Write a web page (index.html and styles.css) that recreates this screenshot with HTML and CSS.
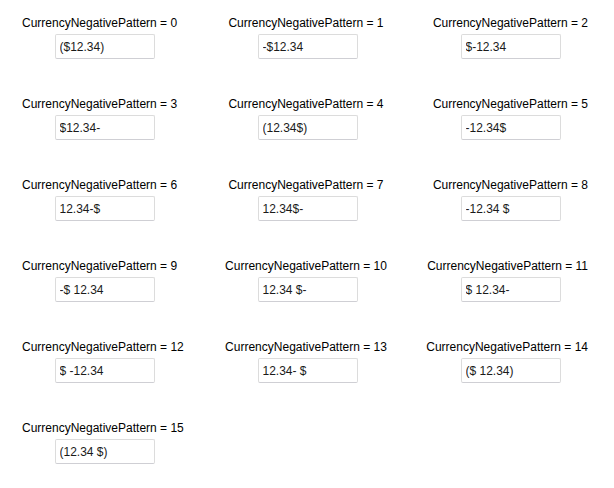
FILE: index.html
```html
<!DOCTYPE html>
<html lang="en">
<head>
    <meta charset="UTF-8">
    <title>CurrencyNegativePattern</title>
    <link rel="stylesheet" href="styles.css">
</head>
<body>
    <!-- one cell per pattern value, three to a row -->
    <div class="pattern-grid">
        <div class="cell col-left">
            <span class="label">CurrencyNegativePattern = 0</span>
            <input class="value-box" type="text" value="($12.34)">
        </div>
        <div class="cell col-mid">
            <span class="label">CurrencyNegativePattern = 1</span>
            <input class="value-box" type="text" value="-$12.34">
        </div>
        <div class="cell col-right">
            <span class="label">CurrencyNegativePattern = 2</span>
            <input class="value-box" type="text" value="$-12.34">
        </div>

        <div class="cell col-left">
            <span class="label">CurrencyNegativePattern = 3</span>
            <input class="value-box" type="text" value="$12.34-">
        </div>
        <div class="cell col-mid">
            <span class="label">CurrencyNegativePattern = 4</span>
            <input class="value-box" type="text" value="(12.34$)">
        </div>
        <div class="cell col-right">
            <span class="label">CurrencyNegativePattern = 5</span>
            <input class="value-box" type="text" value="-12.34$">
        </div>

        <div class="cell col-left">
            <span class="label">CurrencyNegativePattern = 6</span>
            <input class="value-box" type="text" value="12.34-$">
        </div>
        <div class="cell col-mid">
            <span class="label">CurrencyNegativePattern = 7</span>
            <input class="value-box" type="text" value="12.34$-">
        </div>
        <div class="cell col-right">
            <span class="label">CurrencyNegativePattern = 8</span>
            <input class="value-box" type="text" value="-12.34 $">
        </div>

        <div class="cell col-left">
            <span class="label">CurrencyNegativePattern = 9</span>
            <input class="value-box" type="text" value="-$ 12.34">
        </div>
        <div class="cell col-mid">
            <span class="label">CurrencyNegativePattern = 10</span>
            <input class="value-box" type="text" value="12.34 $-">
        </div>
        <div class="cell col-right">
            <span class="label">CurrencyNegativePattern = 11</span>
            <input class="value-box" type="text" value="$ 12.34-">
        </div>

        <div class="cell col-left">
            <span class="label">CurrencyNegativePattern = 12</span>
            <input class="value-box" type="text" value="$ -12.34">
        </div>
        <div class="cell col-mid">
            <span class="label">CurrencyNegativePattern = 13</span>
            <input class="value-box" type="text" value="12.34- $">
        </div>
        <div class="cell col-right">
            <span class="label">CurrencyNegativePattern = 14</span>
            <input class="value-box" type="text" value="($ 12.34)">
        </div>

        <div class="cell col-left">
            <span class="label">CurrencyNegativePattern = 15</span>
            <input class="value-box" type="text" value="(12.34 $)">
        </div>
    </div>
</body>
</html>
```

FILE: styles.css
```css
body {
    margin: 0;
    background-color: white;
    font-family: "Liberation Sans", Arial, sans-serif;
    font-size: 12px;
    color: #000;
}

.pattern-grid {
    display: grid;
    grid-template-columns: repeat(3, 203px);
    row-gap: 37px;
    padding: 15px 0 0 3px;
}

.cell {
    display: flex;
    flex-direction: column;
    align-items: center;
    gap: 3px;
}

.label {
    line-height: 16px;
    white-space: nowrap;
}

/* long labels hug the outer edges of the first and last columns */
.col-left .label {
    align-self: flex-start;
    padding-left: 19px;
}

.col-mid .label {
    padding-right: 3px;
}

.col-right .label {
    align-self: flex-end;
    padding-right: 24px;
}

.value-box {
    box-sizing: border-box;
    width: 100px;
    height: 25px;
    margin: 0;
    padding: 0 4px;
    border: 1px solid #dcdcdc;
    border-bottom-color: #cfcfd4;
    border-radius: 2px;
    font-family: inherit;
    font-size: 12px;
    color: #1a1a1a;
    background-color: white;
    outline: none;
}
```
